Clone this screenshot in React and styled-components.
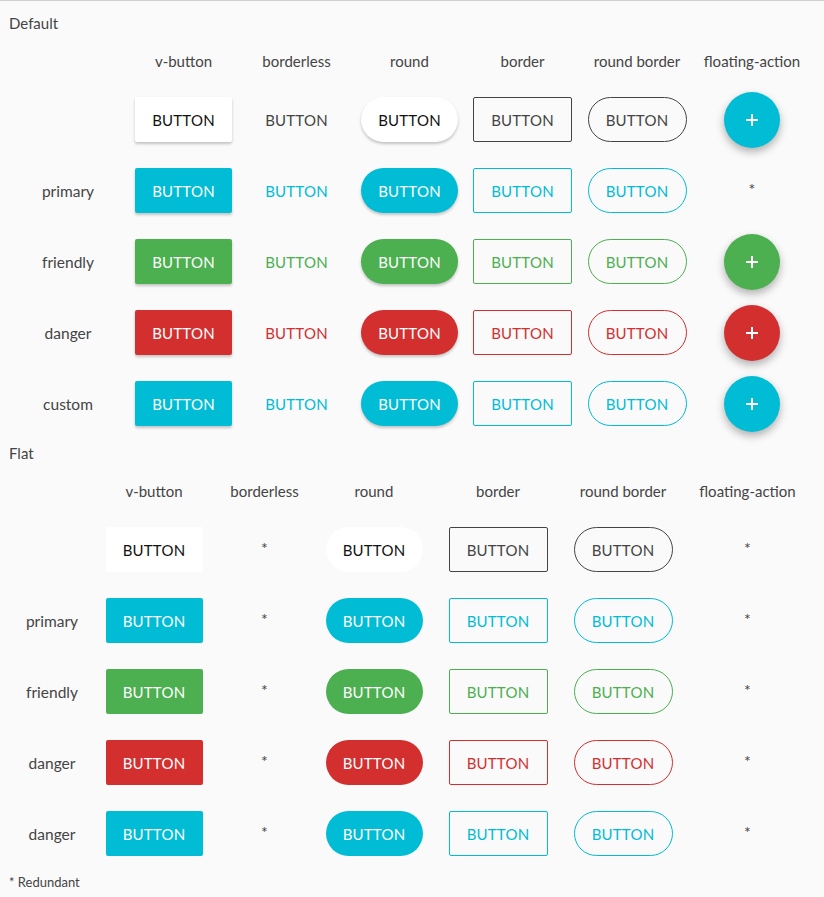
import React from "react";
import styled, { createGlobalStyle, css } from "styled-components";

const GlobalStyle = createGlobalStyle`
  html, body {
    margin: 0;
    padding: 0;
    background: #fafafa;
  }
  body {
    font-family: "Lato", "Liberation Sans", sans-serif;
    color: #444;
  }
`;

const COLORS = {
  default: "#ffffff",
  primary: "#00bcd4",
  friendly: "#4caf50",
  danger: "#d32f2f",
  custom: "#00bcd4",
};

const Page = styled.div`
  border-top: 1px solid #cfcfcf;
  padding: 12px 9px 0;
  min-height: 100vh;
  box-sizing: border-box;
`;

const SectionTitle = styled.div`
  font-size: 15px;
  line-height: 20px;
  color: #444;
  margin-top: ${({ $first }) => ($first ? "0" : "4px")};
  margin-bottom: 4px;
`;

const Grid = styled.div`
  display: grid;
  grid-template-columns: ${({ $cols }) => $cols};
  grid-auto-rows: 71px;
  grid-template-rows: 47px;
  align-items: center;
  justify-items: center;
`;

const HeadCell = styled.div`
  font-size: 15px;
  color: #444;
  white-space: nowrap;
`;

const Label = styled.div`
  font-size: 15.5px;
  color: #444;
`;

const Star = styled.div`
  font-size: 16px;
  color: #444;
  margin-bottom: 4px;
`;

const Button = styled.button`
  box-sizing: border-box;
  width: ${({ $border }) => ($border ? "99px" : "97px")};
  height: 45px;
  padding: 0;
  font-family: inherit;
  font-size: 15px;
  letter-spacing: 0.2px;
  cursor: pointer;
  border-radius: ${({ $round }) => ($round ? "23px" : "2px")};
  ${({ $variant, $kind, $flat }) => {
    const c = COLORS[$variant];
    const isDefault = $variant === "default";
    if ($kind === "fill") {
      return css`
        background: ${c};
        color: ${isDefault ? "#111" : "#fff"};
        border: none;
        box-shadow: ${$flat ? "none" : "0 2px 3px rgba(0, 0, 0, 0.22)"};
      `;
    }
    if ($kind === "ghost") {
      return css`
        background: transparent;
        color: ${isDefault ? "#444" : c};
        border: none;
      `;
    }
    return css`
      background: transparent;
      color: ${isDefault ? "#444" : c};
      border: 1px solid ${isDefault ? "#444" : c};
    `;
  }}
`;

const Fab = styled.button`
  width: 56px;
  height: 56px;
  border-radius: 50%;
  border: none;
  padding: 0;
  background: ${({ $variant }) => ($variant === "default" ? COLORS.primary : COLORS[$variant])};
  box-shadow: 0 4px 9px rgba(0, 0, 0, 0.3);
  display: flex;
  align-items: center;
  justify-content: center;
  cursor: pointer;
`;

const Footnote = styled.div`
  font-size: 13px;
  line-height: 20px;
  color: #444;
  margin-top: 3px;
`;

const Plus = () => (
  <svg width="14" height="14" viewBox="0 0 14 14">
    <path d="M7 1v12M1 7h12" stroke="#fff" strokeWidth="2" />
  </svg>
);

const headers = ["v-button", "borderless", "round", "border", "round border", "floating-action"];

const Section = ({ title, first, cols, rows, flat }) => (
  <>
    <SectionTitle $first={first}>{title}</SectionTitle>
    <Grid $cols={cols}>
      <div />
      {headers.map((h) => (
        <HeadCell key={h}>{h}</HeadCell>
      ))}
      {rows.map(({ label, variant, fab }, i) => (
        <React.Fragment key={i}>
          <Label>{label}</Label>
          <Button $variant={variant} $kind="fill" $flat={flat}>BUTTON</Button>
          {flat ? <Star>*</Star> : <Button $variant={variant} $kind="ghost">BUTTON</Button>}
          <Button $variant={variant} $kind="fill" $round $flat={flat}>BUTTON</Button>
          <Button $variant={variant} $kind="outline" $border>BUTTON</Button>
          <Button $variant={variant} $kind="outline" $border $round>BUTTON</Button>
          {fab ? (
            <Fab $variant={variant}>
              <Plus />
            </Fab>
          ) : (
            <Star>*</Star>
          )}
        </React.Fragment>
      ))}
    </Grid>
  </>
);

const defaultRows = [
  { label: "", variant: "default", fab: true },
  { label: "primary", variant: "primary", fab: false },
  { label: "friendly", variant: "friendly", fab: true },
  { label: "danger", variant: "danger", fab: true },
  { label: "custom", variant: "custom", fab: true },
];

const flatRows = [
  { label: "", variant: "default" },
  { label: "primary", variant: "primary" },
  { label: "friendly", variant: "friendly" },
  { label: "danger", variant: "danger" },
  { label: "danger", variant: "custom" },
];

export default function App() {
  return (
    <>
      <GlobalStyle />
      <Page>
        <Section
          title="Default"
          first
          cols="118px 113px 113px 113px 113px 116px 114px"
          rows={defaultRows}
        />
        <Section
          title="Flat"
          cols="86px 118px 103px 116px 132px 118px 131px"
          rows={flatRows}
          flat
        />
        <Footnote>* Redundant</Footnote>
      </Page>
    </>
  );
}
